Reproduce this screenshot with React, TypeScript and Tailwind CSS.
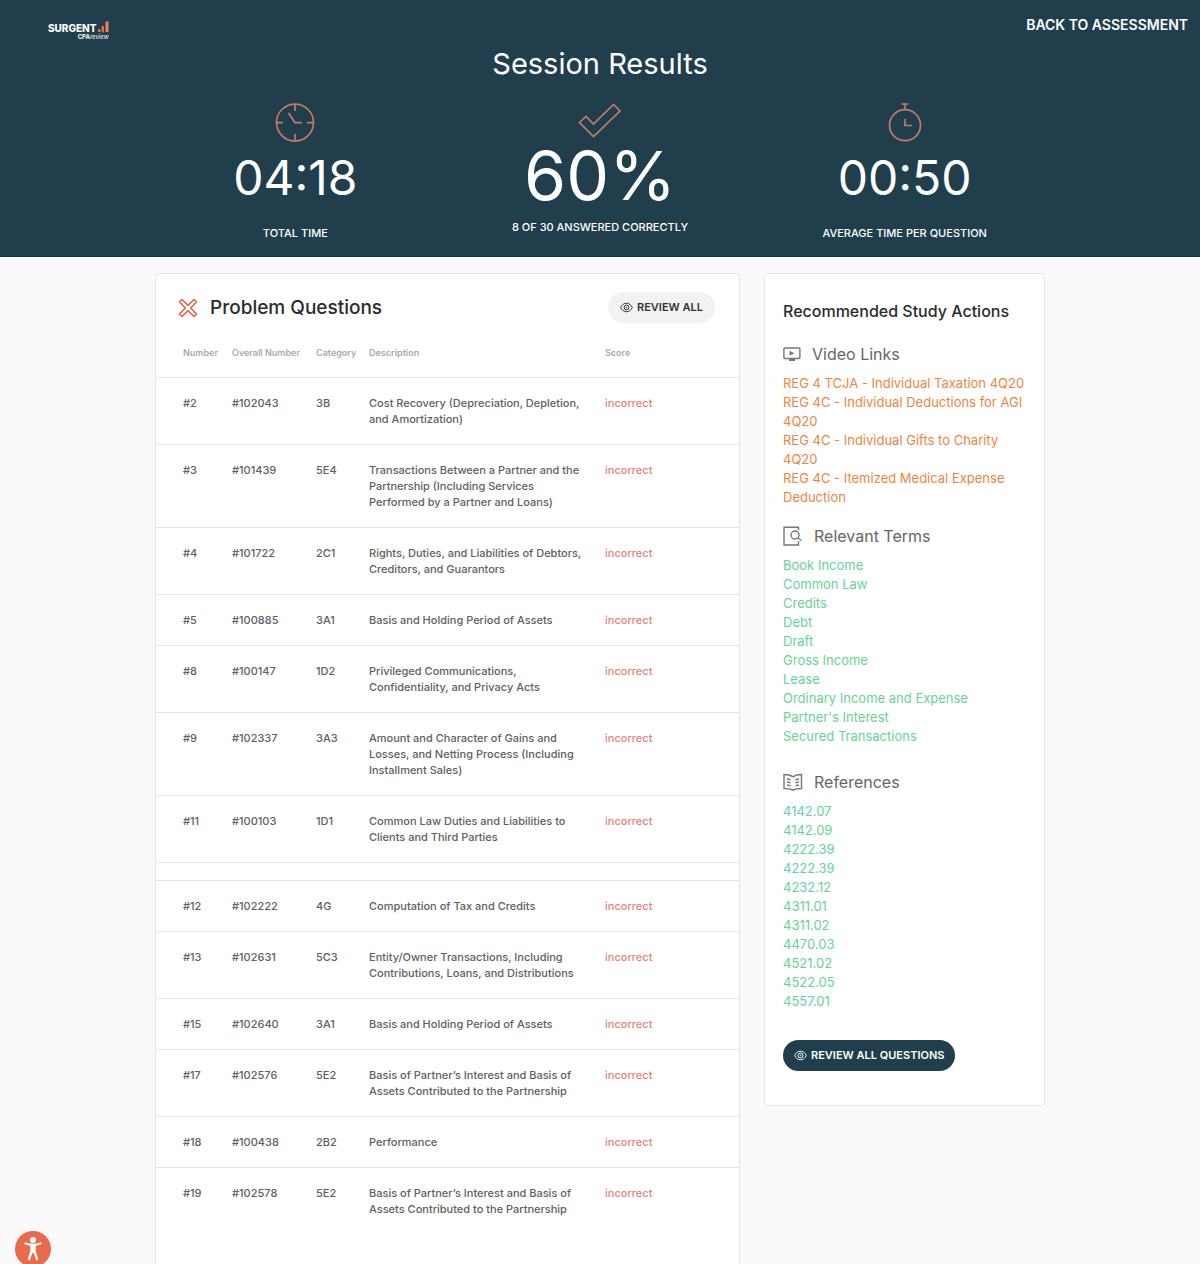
import React from 'react';

type Question = {
  number: string;
  overall: string;
  category: string;
  description: string;
};

const firstQuestions: Question[] = [
  { number: '#2', overall: '#102043', category: '3B', description: 'Cost Recovery (Depreciation, Depletion, and Amortization)' },
  { number: '#3', overall: '#101439', category: '5E4', description: 'Transactions Between a Partner and the Partnership (Including Services Performed by a Partner and Loans)' },
  { number: '#4', overall: '#101722', category: '2C1', description: 'Rights, Duties, and Liabilities of Debtors, Creditors, and Guarantors' },
  { number: '#5', overall: '#100885', category: '3A1', description: 'Basis and Holding Period of Assets' },
  { number: '#8', overall: '#100147', category: '1D2', description: 'Privileged Communications, Confidentiality, and Privacy Acts' },
  { number: '#9', overall: '#102337', category: '3A3', description: 'Amount and Character of Gains and Losses, and Netting Process (Including Installment Sales)' },
  { number: '#11', overall: '#100103', category: '1D1', description: 'Common Law Duties and Liabilities to Clients and Third Parties' },
];

const moreQuestions: Question[] = [
  { number: '#12', overall: '#102222', category: '4G', description: 'Computation of Tax and Credits' },
  { number: '#13', overall: '#102631', category: '5C3', description: 'Entity/Owner Transactions, Including Contributions, Loans, and Distributions' },
  { number: '#15', overall: '#102640', category: '3A1', description: 'Basis and Holding Period of Assets' },
  { number: '#17', overall: '#102576', category: '5E2', description: 'Basis of Partner’s Interest and Basis of Assets Contributed to the Partnership' },
  { number: '#18', overall: '#100438', category: '2B2', description: 'Performance' },
  { number: '#19', overall: '#102578', category: '5E2', description: 'Basis of Partner’s Interest and Basis of Assets Contributed to the Partnership' },
];

const videos = [
  'REG 4 TCJA - Individual Taxation 4Q20',
  'REG 4C - Individual Deductions for AGI 4Q20',
  'REG 4C - Individual Gifts to Charity 4Q20',
  'REG 4C - Itemized Medical Expense Deduction',
];

const terms = [
  'Book Income',
  'Common Law',
  'Credits',
  'Debt',
  'Draft',
  'Gross Income',
  'Lease',
  'Ordinary Income and Expense',
  "Partner's Interest",
  'Secured Transactions',
];

const references = [
  '4142.07',
  '4142.09',
  '4222.39',
  '4222.39',
  '4232.12',
  '4311.01',
  '4311.02',
  '4470.03',
  '4521.02',
  '4522.05',
  '4557.01',
];

const ClockIcon = () => (
  <svg width="40" height="40" viewBox="0 0 40 40" fill="none" stroke="#c97869" strokeWidth="1.7">
    <circle cx="20" cy="20.6" r="18.5" />
    <path d="M20 2v7M20 32v7M1.500 20.600H8M32 20.600h6.500M13.500 11l6.500 9.600h7" />
  </svg>
);

const CheckIcon = () => (
  <svg width="44" height="40" viewBox="0 0 44 40" fill="none" stroke="#c97869" strokeWidth="1.7">
    <path d="M1.5 20.5L8 14.5l7.5 7.5L35.500 2.500l6.500 6.500L15.5 34.5z" />
  </svg>
);

const StopwatchIcon = () => (
  <svg width="36" height="40" viewBox="0 0 36 40" fill="none" stroke="#c97869" strokeWidth="1.7">
    <circle cx="18" cy="23.2" r="15.5" />
    <path d="M14.5 2h7M18 2v6M18 17v6.5h7" />
  </svg>
);

const CrossIcon = () => (
  <svg width="20" height="20" viewBox="0 0 20 20" fill="none" stroke="#e8694f" strokeWidth="1.7" strokeLinejoin="round">
    <path d="M4 1.5L10 7.3l6-5.8L18.5 4l-5.8 6 5.8 6-2.5 2.5-6-5.8-6 5.8L1.5 16l5.8-6-5.8-6z" />
  </svg>
);

const EyeIcon = () => (
  <svg width="13" height="11" viewBox="0 0 13 11" fill="none" stroke="currentColor" strokeWidth="1">
    <path d="M.7 5.5C2 2.8 4 1.2 6.5 1.2s4.500 1.600 5.800 4.300C11 8.200 9 9.800 6.500 9.800S2 8.200.7 5.500z" />
    <circle cx="6.500" cy="5.500" r="2.400" />
    <circle cx="6.500" cy="5.500" r=".4" />
  </svg>
);

const VideoIcon = () => (
  <svg width="18" height="14" viewBox="0 0 18 14" fill="none" stroke="#777" strokeWidth="1.400">
    <rect x=".9" y="1" width="16" height="10.500" rx="1" />
    <path d="M6 13h6" strokeWidth="2" />
    <path d="M6.500 3.800v5l4.800-2.500z" fill="#777" stroke="none" />
  </svg>
);

const TermsIcon = () => (
  <svg width="20" height="20" viewBox="0 0 20 20" fill="none" stroke="#777" strokeWidth="1.400">
    <path d="M15.500 4V1.200H1V19h14.500v-4" />
    <circle cx="12" cy="9" r="4" />
    <path d="M14.800 11.800l3.500 2.700" />
  </svg>
);

const BookIcon = () => (
  <svg width="20" height="18" viewBox="0 0 20 18" fill="none" stroke="#777" strokeWidth="1.400">
    <path d="M1 1.500c3.500 0 6.500.5 9 2.300 2.500-1.800 5.500-2.300 8.500-2.300v14c-3 0-6 .3-8.500 1.500-2.500-1.200-5.500-1.500-9-1.500z" />
    <path d="M4 6l3.500.7M4 9l3.500.7M4 12l3.500.7M16 6l-3.500.7M16 9l-3.500.7M16 12l-3.500.7" />
  </svg>
);

const Logo = () => (
  <a href="#" aria-label="Surgent CPA Review" className="flex flex-col items-end pt-[21px] text-white">
    <span className="flex items-end gap-px text-[10px] leading-[12px] font-extrabold">
      SURGENT
      <svg width="11" height="12" viewBox="0 0 11 12" className="mb-px">
        <rect x="0" y="8" width="2.500" height="3" fill="#e8694f" />
        <path d="M3.500 5H6v7L3.500 10z" fill="#e8694f" />
        <path d="M7.500 1L10.500 0v11h-3z" fill="#f0835a" />
      </svg>
    </span>
    <span className="text-[6px] leading-[6px] font-bold">
      CPA<span className="font-normal italic">review</span>
    </span>
  </a>
);

const QuestionRow: React.FC<{ question: Question }> = ({ question }) => (
  <tr className="border-t border-[#e6e6e6] align-top">
    <td className="py-[17px] pl-[27px]">{question.number}</td>
    <td className="py-[17px]">{question.overall}</td>
    <td className="py-[17px]">{question.category}</td>
    <td className="py-[17px] pr-4">{question.description}</td>
    <td className="py-[17px] text-[#ec7f79]">incorrect</td>
  </tr>
);

const LinkList: React.FC<{ items: string[]; className: string }> = ({ items, className }) => (
  <ul className={`text-[13px] leading-[19px] ${className}`}>
    {items.map((item, i) => (
      <li key={i}>
        <a href="#" className="hover:underline">{item}</a>
      </li>
    ))}
  </ul>
);

const App: React.FC = () => {
  return (
    <div className="flex min-h-screen flex-col bg-[#fafafa] font-[Inter,'Liberation_Sans',sans-serif]">
      {/* Header */}
      <header className="border-b border-[#17303d] bg-[#213e4d] pb-[13px] text-white">
        <nav className="flex h-12 items-start justify-between pr-3 pl-12">
          <Logo />
          <a href="#" className="pt-[15px] text-[14px] leading-[20px] font-semibold">BACK TO ASSESSMENT</a>
        </nav>
        <h1 className="text-center text-[29px] leading-[32px]">Session Results</h1>
        <div className="mx-auto mt-[22px] grid max-w-[914px] grid-cols-3 text-center">
          <div className="flex flex-col items-center">
            <ClockIcon />
            <p className="text-[48px] leading-[72px]">04:18</p>
            <p className="mt-[9px] text-[11px] leading-[20px] font-medium">TOTAL TIME</p>
          </div>
          <div className="flex flex-col items-center">
            <CheckIcon />
            <p className="text-[68px] leading-[66px]">60%</p>
            <p className="mt-[9px] text-[11px] leading-[20px] font-medium">8 OF 30 ANSWERED CORRECTLY</p>
          </div>
          <div className="flex flex-col items-center">
            <StopwatchIcon />
            <p className="text-[48px] leading-[72px]">00:50</p>
            <p className="mt-[9px] text-[11px] leading-[20px] font-medium">AVERAGE TIME PER QUESTION</p>
          </div>
        </div>
      </header>

      {/* Main Content */}
      <main className="mx-auto flex w-full max-w-[890px] flex-1 gap-6 pt-4">
        <section className="min-w-0 flex-1 rounded-t border border-b-0 border-[#e6e6e6] bg-white">
          <div className="flex items-center justify-between pt-[18px] pr-6 pl-[22px]">
            <h2 className="flex items-center gap-3 text-[19px] leading-[30px] font-medium text-[#2b2b2b]">
              <CrossIcon />
              Problem Questions
            </h2>
            <button className="flex h-[31px] items-center gap-1 rounded-full bg-[#f2f2f2] px-3 text-[11px] font-semibold text-[#333]">
              <EyeIcon />
              REVIEW ALL
            </button>
          </div>
          <table className="mt-[22px] w-full table-fixed border-collapse text-left text-[11px] leading-[16px] font-medium text-[#606060]">
            <colgroup>
              <col className="w-[76px]" />
              <col className="w-[84px]" />
              <col className="w-[53px]" />
              <col className="w-[236px]" />
              <col />
            </colgroup>
            <thead>
              <tr className="text-[9px] text-[#aaa]">
                <th className="pb-4 pl-[27px] font-semibold">Number</th>
                <th className="pb-4 font-semibold">Overall Number</th>
                <th className="pb-4 font-semibold">Category</th>
                <th className="pb-4 font-semibold">Description</th>
                <th className="pb-4 font-semibold">Score</th>
              </tr>
            </thead>
            <tbody>
              {firstQuestions.map((question) => (
                <QuestionRow key={question.number} question={question} />
              ))}
            </tbody>
            <tbody>
              <tr className="border-t border-[#e6e6e6]">
                <td colSpan={5} className="h-[18px]"></td>
              </tr>
              {moreQuestions.map((question) => (
                <QuestionRow key={question.number} question={question} />
              ))}
            </tbody>
          </table>
        </section>

        <aside className="w-[281px] shrink-0 self-start rounded border border-[#e6e6e6] bg-white pt-[25px] pr-4 pb-[34px] pl-[18px]">
          <h2 className="text-[16px] leading-[24px] font-medium text-[#2b2b2b]">Recommended Study Actions</h2>

          <h3 className="mt-[19px] flex items-center gap-[11px] text-[16px] leading-[24px] text-[#666]">
            <VideoIcon />
            Video Links
          </h3>
          <LinkList items={videos} className="mt-2 text-[#ee853f]" />

          <h3 className="mt-[17px] flex items-center gap-[11px] text-[16px] leading-[24px] text-[#666]">
            <TermsIcon />
            Relevant Terms
          </h3>
          <LinkList items={terms} className="mt-2 text-[#66d496]" />

          <h3 className="mt-6 flex items-center gap-[11px] text-[16px] leading-[24px] text-[#666]">
            <BookIcon />
            References
          </h3>
          <LinkList items={references} className="mt-2 text-[#66d496]" />

          <button className="mt-[29px] flex h-[31px] items-center gap-1 rounded-full bg-[#213e4d] px-[11px] text-[11px] font-semibold text-white">
            <EyeIcon />
            REVIEW ALL QUESTIONS
          </button>
        </aside>
      </main>

      {/* Accessibility menu */}
      <button aria-label="Accessibility" className="fixed -bottom-[3px] left-[15px] size-9 rounded-full bg-[#e96a4d]">
        <svg width="36" height="36" viewBox="0 0 36 36" fill="none" stroke="#fff" strokeLinecap="round" strokeLinejoin="round">
          <circle cx="18" cy="9" r="3" fill="#fff" stroke="none" />
          <path d="M10.500 12.500c5 1.800 10 1.800 15 0" strokeWidth="2.200" />
          <path d="M16.500 14v6.500L14 28M19.500 14v6.500L22 28M18 14v7" strokeWidth="2.400" />
        </svg>
      </button>
    </div>
  );
};

export default App;
